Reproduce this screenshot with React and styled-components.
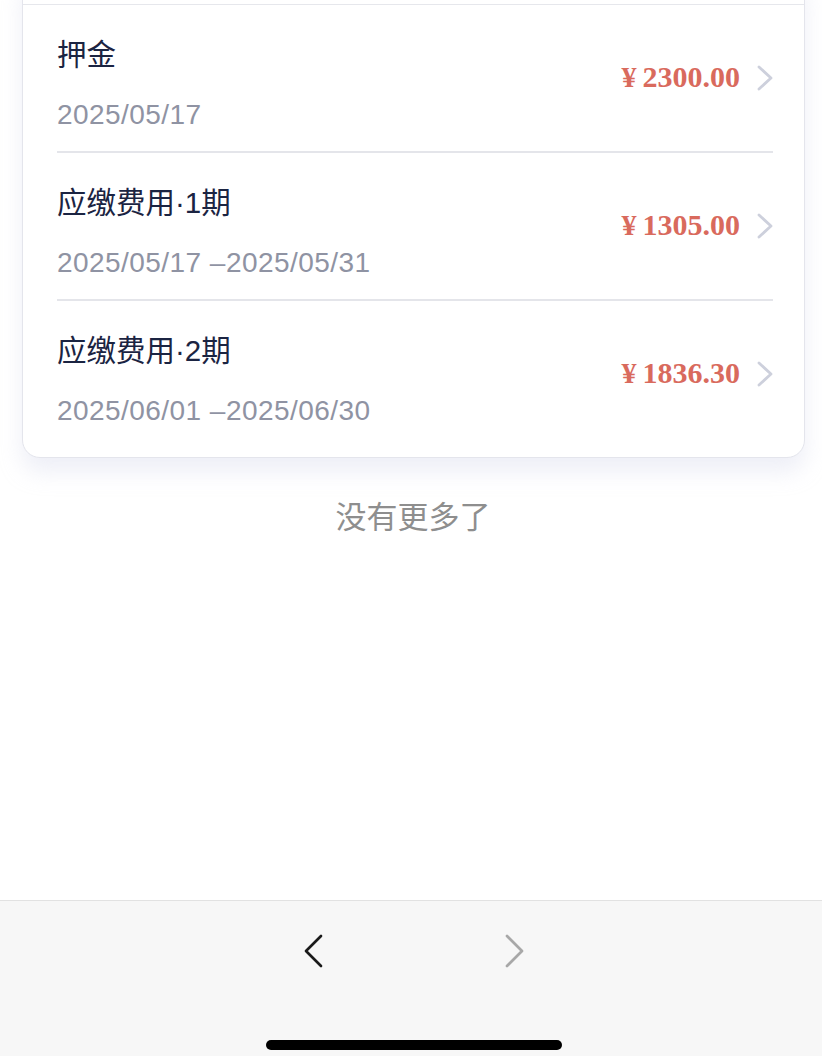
import React from 'react';
import styled, { createGlobalStyle } from "styled-components";

const GlobalStyle = createGlobalStyle`
  html, body {
    margin: 0;
    padding: 0;
    background: #ffffff;
    font-family: "Liberation Sans", "Noto Sans CJK SC", sans-serif;
    overflow: hidden;
  }
`;

const bills = [
    { title: "押金", date: "2025/05/17", amount: "2300.00" },
    { title: "应缴费用·1期", date: "2025/05/17 –2025/05/31", amount: "1305.00" },
    { title: "应缴费用·2期", date: "2025/06/01 –2025/06/30", amount: "1836.30" },
];

function Chevron({ dir, color, w, h, stroke }) {
    const d = dir === "left" ? `M${w - 2} 2 L2 ${h / 2} L${w - 2} ${h - 2}` : `M2 2 L${w - 2} ${h / 2} L2 ${h - 2}`;
    return (
        <svg width={w} height={h} viewBox={`0 0 ${w} ${h}`}>
            <path d={d} fill="none" stroke={color} strokeWidth={stroke} strokeLinecap="round" strokeLinejoin="round" />
        </svg>
    );
}

export default function App() {
    return (
        <Page>
            <GlobalStyle />
            <Card>
                <CardTop />
                {bills.map((bill, index) => (
                    <Row key={index} last={index === bills.length - 1}>
                        <Info>
                            <Title>{bill.title}</Title>
                            <DateText>{bill.date}</DateText>
                        </Info>
                        <Side>
                            <Amount>¥&thinsp;{bill.amount}</Amount>
                            <Chevron dir="right" color="#cdd0dc" w={16} h={26} stroke={2.8} />
                        </Side>
                    </Row>
                ))}
            </Card>
            <NoMore>没有更多了</NoMore>
            <Toolbar>
                <NavButtons>
                    <Chevron dir="left" color="#1a1a1a" w={19} h={34} stroke={2.7} />
                    <Chevron dir="right" color="#a8a8a8" w={19} h={34} stroke={2.7} />
                </NavButtons>
                <HomeBar />
            </Toolbar>
        </Page>
    );
}

const Page = styled.div`
display: flex;
flex-direction: column;
height: 100vh;
`;

const Card = styled.div`
margin: -30px 17px 0 22px;
background: #fff;
border: 1.5px solid #e4e5ec;
border-radius: 18px;
padding-bottom: 10px;
box-shadow: 0 14px 22px rgba(205, 210, 232, 0.35);
`;

const CardTop = styled.div`
height: 33px;
border-bottom: 1.5px solid #e6e7ec;
`;

const Row = styled.div`
display: flex;
align-items: center;
margin: 0 31px 0 34px;
padding: 33px 0 20px;
border-bottom: ${props => props.last ? "none" : "2px solid #e4e5ea"};
`;

const Info = styled.div`
flex: 1;
display: flex;
flex-direction: column;
gap: 27px;
`;

const Side = styled.div`
display: flex;
align-items: center;
gap: 17px;
margin-top: -13px;
`;

const Title = styled.div`
font-size: 29.5px;
line-height: 34px;
color: #1b2442;
`;

const DateText = styled.div`
font-size: 28px;
line-height: 32px;
letter-spacing: 0.45px;
color: #8f93a3;
`;

const Amount = styled.div`
font-family: "Liberation Serif", serif;
font-weight: bold;
font-size: 30px;
color: #d96a5d;
margin-top: -2px;
`;

const NoMore = styled.div`
text-align: center;
font-family: "Noto Sans CJK SC", sans-serif;
font-size: 31px;
color: #8e8e8e;
margin-top: 34px;
padding-left: 4px;
`;

const Toolbar = styled.div`
margin-top: auto;
height: 155px;
background: #f7f7f7;
border-top: 1.5px solid #e2e2e2;
display: flex;
flex-direction: column;
align-items: center;
padding-left: 5px;
`;

const NavButtons = styled.div`
display: flex;
gap: 182px;
margin-top: 33px;
`;

const HomeBar = styled.div`
width: 296px;
height: 10px;
border-radius: 5px;
background: #000;
margin-top: auto;
margin-bottom: 6px;
`;
